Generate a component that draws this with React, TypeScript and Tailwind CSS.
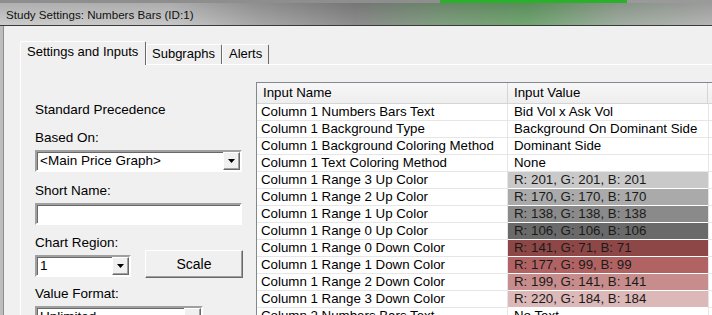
import React from "react";

type Row = { name: string; value: string; bg?: string };

const rows: Row[] = [
  { name: "Column 1 Numbers Bars Text", value: "Bid Vol x Ask Vol" },
  { name: "Column 1 Background Type", value: "Background On Dominant Side" },
  { name: "Column 1 Background Coloring Method", value: "Dominant Side" },
  { name: "Column 1 Text Coloring Method", value: "None" },
  { name: "Column 1 Range 3 Up Color", value: "R: 201, G: 201, B: 201", bg: "bg-[#c9c9c9]" },
  { name: "Column 1 Range 2 Up Color", value: "R: 170, G: 170, B: 170", bg: "bg-[#aaaaaa]" },
  { name: "Column 1 Range 1 Up Color", value: "R: 138, G: 138, B: 138", bg: "bg-[#8a8a8a]" },
  { name: "Column 1 Range 0 Up Color", value: "R: 106, G: 106, B: 106", bg: "bg-[#6a6a6a]" },
  { name: "Column 1 Range 0 Down Color", value: "R: 141, G: 71, B: 71", bg: "bg-[#8d4747]" },
  { name: "Column 1 Range 1 Down Color", value: "R: 177, G: 99, B: 99", bg: "bg-[#b16363]" },
  { name: "Column 1 Range 2 Down Color", value: "R: 199, G: 141, B: 141", bg: "bg-[#c78d8d]" },
  { name: "Column 1 Range 3 Down Color", value: "R: 220, G: 184, B: 184", bg: "bg-[#dcb8b8]" },
  { name: "Column 2 Numbers Bars Text", value: "No Text" },
  { name: "Column 2 Background Type", value: "Background On Dominant Side" },
];

function DropBtn() {
  return (
    <div className="w-[17px] self-stretch shrink-0 bg-[#f0f0f0] border border-t-white border-l-white border-b-[#696969] border-r-[#696969] shadow-[inset_-1px_-1px_0_#a0a0a0] flex items-center justify-center">
      <svg width="7" height="4" viewBox="0 0 7 4">
        <path d="M0 0H7L3.5 4Z" fill="#000" />
      </svg>
    </div>
  );
}

const sunken =
  "border-2 border-[#a0a0a0] border-b-white border-r-white shadow-[inset_1px_1px_0_#696969] bg-white";

export default function App() {
  return (
    <div className="w-[712px] h-[315px] overflow-hidden flex flex-col bg-[#f0f0f0] text-black font-['Liberation_Sans',Arial,sans-serif]">
      {/* background strip above window */}
      <div className="h-[3px] flex shrink-0">
        <div className="w-[440px] bg-[#8e8e8e]" />
        <div className="w-[187px] bg-[#2bb02b]" />
        <div className="flex-1 bg-[#9a9a9a]" />
      </div>
      {/* title bar */}
      <div className="h-[23px] shrink-0 border-b border-[#3a3a3a] pl-[6px] pt-[4px] leading-[16px] text-[11.6px] text-[#111] bg-[linear-gradient(180deg,rgba(0,0,0,0.12),rgba(255,255,255,0.06)),linear-gradient(90deg,#c8c8c8_0%,#c4c4c4_24%,#a2a2a2_36%,#868686_50%,#789878_62%,#68a068_74%,#9aa89a_87%,#b0b0b0_100%)]">
        Study Settings: Numbers Bars (ID:1)
      </div>
      {/* body */}
      <div className="flex-1 min-h-0 flex">
        <div className="w-[4px] shrink-0 bg-[#bdbdbd] border-r border-[#8c8c8c]" />
        <div className="flex-1 min-w-0 flex flex-col">
          {/* tabs */}
          <div className="flex items-end h-[23px] mt-[15px] ml-[16px] shrink-0 text-[13px] leading-[16px]">
            <div className="relative z-10 h-[24px] -mb-[1px] w-[126px] bg-[#f0f0f0] border-l border-t border-white border-r border-r-[#696969] rounded-t-[2px] pt-[2px] pl-[6px] whitespace-nowrap">
              Settings and Inputs
            </div>
            <div className="h-[20px] w-[76px] border-l border-t border-white border-r border-r-[#696969] rounded-t-[2px] pt-[1px] pl-[5px] whitespace-nowrap">
              Subgraphs
            </div>
            <div className="h-[20px] w-[47px] border-l border-t border-white border-r border-r-[#696969] rounded-t-[2px] pt-[1px] pl-[6px] whitespace-nowrap">
              Alerts
            </div>
          </div>
          {/* panel */}
          <div className="flex-1 min-h-0 ml-[16px] border-l border-t border-white flex">
            {/* left column */}
            <div className="w-[207px] ml-[14px] shrink-0 flex flex-col text-[13.5px] leading-[16px]">
              <div className="mt-[37px] shrink-0">Standard Precedence</div>
              <div className="mt-[12px] shrink-0">Based On:</div>
              <div className={`mt-[4px] h-[22px] w-[207px] shrink-0 flex items-center ${sunken}`}>
                <span className="flex-1 pl-[3px] whitespace-nowrap">&lt;Main Price Graph&gt;</span>
                <DropBtn />
              </div>
              <div className="mt-[11px] shrink-0">Short Name:</div>
              <div className={`mt-[4px] h-[22px] w-[207px] shrink-0 ${sunken}`} />
              <div className="mt-[10px] shrink-0">Chart Region:</div>
              <div className="mt-[-1px] shrink-0 flex items-start">
                <div className={`mt-[5px] h-[22px] w-[96px] shrink-0 flex items-center ${sunken}`}>
                  <span className="flex-1 pl-[3px]">1</span>
                  <DropBtn />
                </div>
                <div className="ml-[14px] h-[28px] w-[98px] shrink-0 bg-[#f0f0f0] border border-t-white border-l-white border-b-[#696969] border-r-[#696969] shadow-[inset_-1px_-1px_0_#a0a0a0] flex items-center justify-center text-[14px]">
                  Scale
                </div>
              </div>
              <div className="mt-[8px] shrink-0">Value Format:</div>
              <div className={`mt-[4px] h-[22px] w-[168px] shrink-0 flex items-center ${sunken}`}>
                <span className="flex-1 pl-[3px]">Unlimited</span>
                <DropBtn />
              </div>
            </div>
            {/* table */}
            <div className="ml-[14px] mt-[17px] flex-1 min-w-0 self-start border-l border-t border-[#828790] bg-white text-[13.3px] leading-[16px] overflow-hidden">
              <div className="flex h-[21px] border-b border-[#d5d5d5] bg-[linear-gradient(180deg,#f7f7f7,#eeeeee)]">
                <div className="w-[251px] shrink-0 border-r border-[#d5d5d5] pl-[6px] pt-[2px] whitespace-nowrap">
                  Input Name
                </div>
                <div className="w-[200px] shrink-0 border-r border-[#d5d5d5] pl-[6px] pt-[2px] whitespace-nowrap">
                  Input Value
                </div>
                <div className="flex-1" />
              </div>
              {rows.map((r) => (
                <div key={r.name} className="flex h-[17px]">
                  <div className="w-[251px] shrink-0 border-r border-b border-[#e6e6e6] pl-[4px] whitespace-nowrap overflow-hidden">
                    {r.name}
                  </div>
                  <div
                    className={`w-[200px] shrink-0 border-b pl-[6px] whitespace-nowrap overflow-hidden ${
                      r.bg ? `${r.bg} border-white text-[#1a1a1a]` : "border-[#e6e6e6]"
                    }`}
                  >
                    {r.value}
                  </div>
                  <div className="flex-1 border-l border-b border-[#e6e6e6]" />
                </div>
              ))}
            </div>
          </div>
        </div>
      </div>
    </div>
  );
}
